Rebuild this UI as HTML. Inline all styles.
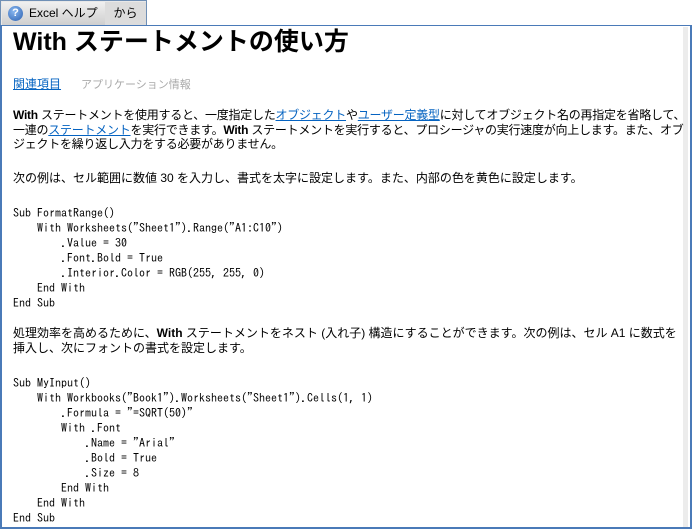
<!DOCTYPE html>
<html><head><meta charset="utf-8"><style>
body{margin:0;width:692px;height:529px;overflow:hidden;background:#fff;position:relative;font-family:"Liberation Sans","Noto Sans CJK JP",sans-serif;color:#000}
.tabs{position:absolute;left:0;top:0;height:25px;width:147px;border:1px solid #6f8fb5;border-bottom:none;box-sizing:border-box;background:#e8e8e8}
.t1{position:absolute;left:1px;top:1px;width:103px;height:23px;background:linear-gradient(#f0f0f0,#cfcfcf);font-size:12px;line-height:23px}
.t2{position:absolute;left:104px;top:1px;width:41px;height:23px;background:#dcdcdc;font-size:12px;line-height:23px;text-align:center}
.q{position:absolute;left:6px;top:4px;width:15px;height:15px;border-radius:50%;background:radial-gradient(circle at 40% 35%,#8ab8f0,#2a5fb0);color:#fff;font-size:11px;font-weight:bold;line-height:15px;text-align:center}
.frame{position:absolute;left:0;top:25px;width:692px;height:504px;box-sizing:border-box;border:2px solid #4a7ab8;border-top:1px solid #4a7ab8}
.sb{position:absolute;right:2px;top:1px;width:5px;bottom:0;background:#ececec}
.a{position:absolute;left:13px;white-space:nowrap;font-size:12px}
h1{position:absolute;left:13px;top:27px;margin:0;font-size:25px;font-weight:bold;line-height:30px;white-space:nowrap}
a{color:#0563c1;text-decoration:underline}
.p{line-height:14.5px}
pre{position:absolute;left:13px;margin:0;font-family:"IPAGothic","Liberation Mono",monospace;font-size:12px;line-height:15px}
</style></head><body>
<div class="tabs"><div class="t1"><span class="q">?</span><span style="position:absolute;left:27px">Excel ヘルプ</span></div><div class="t2">から</div></div>
<div class="frame"><div class="sb"></div></div>
<h1>With ステートメントの使い方</h1>
<div class="a" style="top:75px"><a>関連項目</a><span style="color:#aaa;margin-left:20px;font-size:11px">アプリケーション情報</span></div>
<div class="a p" style="top:108px;letter-spacing:-0.25px"><b>With</b> ステートメントを使用すると、一度指定した<a>オブジェクト</a>や<a>ユーザー定義型</a>に対してオブジェクト名の再指定を省略して、<br>一連の<a>ステートメント</a>を実行できます。<b>With</b> ステートメントを実行すると、プロシージャの実行速度が向上します。また、オブ<br>ジェクトを繰り返し入力をする必要がありません。</div>
<div class="a" style="top:169px">次の例は、セル範囲に数値 30 を入力し、書式を太字に設定します。また、内部の色を黄色に設定します。</div>
<pre style="top:206px">Sub FormatRange()
    With Worksheets("Sheet1").Range("A1:C10")
        .Value = 30
        .Font.Bold = True
        .Interior.Color = RGB(255, 255, 0)
    End With
End Sub</pre>
<div class="a p" style="top:326px;line-height:15px">処理効率を高めるために、<b>With</b> ステートメントをネスト (入れ子) 構造にすることができます。次の例は、セル A1 に数式を<br>挿入し、次にフォントの書式を設定します。</div>
<pre style="top:376px">Sub MyInput()
    With Workbooks("Book1").Worksheets("Sheet1").Cells(1, 1)
        .Formula = "=SQRT(50)"
        With .Font
            .Name = "Arial"
            .Bold = True
            .Size = 8
        End With
    End With
End Sub</pre>
</body></html>
